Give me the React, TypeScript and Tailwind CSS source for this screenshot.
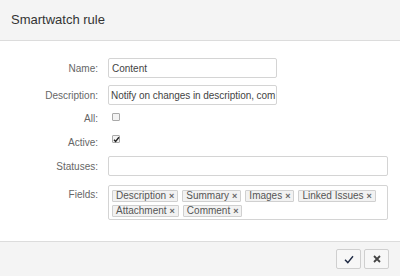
import React from "react";

const font = { fontFamily: '"Liberation Sans", Arial, sans-serif' };

function Label({ children, className = "" }: { children: React.ReactNode; className?: string }) {
  return (
    <div className={"w-[98px] shrink-0 text-right text-[10px] text-[#666] " + className}>{children}</div>
  );
}

function Checkbox({ checked }: { checked?: boolean }) {
  return (
    <span className="relative flex h-[8px] w-[8px] items-center justify-center rounded-[1px] border border-[#a9a9a9] bg-[#f3f3f3]">
      {checked && (
        <svg width="7" height="7" viewBox="0 0 8 8" className="absolute">
          <path d="M1.2 4.2 L3 6.2 L6.8 1.5" fill="none" stroke="#222" strokeWidth="1.6" />
        </svg>
      )}
    </span>
  );
}

function Tag({ children }: { children: React.ReactNode }) {
  return (
    <span className="flex h-[12px] items-center gap-[3px] rounded-[1px] border border-[#d0d0d0] bg-[#f2f2f2] px-[3px] text-[10px] leading-[10px] text-[#555]">
      {children}
      <span className="text-[9px] font-bold text-[#666]">×</span>
    </span>
  );
}

export default function App() {
  return (
    <div className="h-[276px] w-[400px] overflow-hidden bg-white" style={font}>
      <div className="flex h-[41px] items-center border-b border-[#dcdcdc] bg-[#f4f4f4] pl-[11px] text-[13px] text-[#333]">
        Smartwatch rule
      </div>
      <div className="h-[200px] pt-[17px]">
        <div className="flex h-[20px] items-center gap-[10px]">
          <Label>Name:</Label>
          <div className="flex h-[20px] w-[169px] items-center rounded-[2px] border border-[#d4d4d4] px-[3px] text-[10px] text-[#444]">
            Content
          </div>
        </div>
        <div className="mt-[7px] flex h-[20px] items-center gap-[10px]">
          <Label>Description:</Label>
          <div className="flex h-[20px] w-[169px] items-center overflow-hidden whitespace-nowrap rounded-[2px] border border-[#d4d4d4] pl-[2px] text-[10px] tracking-[-0.05px] text-[#444]">
            Notify on changes in description, com
          </div>
        </div>
        <div className="mt-[6px] flex h-[16px] items-start gap-[14px]">
          <Label className="leading-[16px]">All:</Label>
          <div className="mt-[2px]">
            <Checkbox />
          </div>
        </div>
        <div className="mt-[8px] flex h-[16px] items-start gap-[14px]">
          <Label className="leading-[16px]">Active:</Label>
          <div className="mt-[0px]">
            <Checkbox checked />
          </div>
        </div>
        <div className="mt-[5px] flex h-[20px] items-center gap-[10px]">
          <Label>Statuses:</Label>
          <div className="h-[20px] w-[280px] rounded-[2px] border border-[#d4d4d4]" />
        </div>
        <div className="mt-[9px] flex items-start gap-[10px]">
          <Label className="pt-[3px] leading-[14px]">Fields:</Label>
          <div className="flex h-[35px] w-[280px] flex-wrap content-start gap-x-[4px] gap-y-[3px] rounded-[2px] border border-[#d4d4d4] px-[3px] pt-[4px]">
            <Tag>Description</Tag>
            <Tag>Summary</Tag>
            <Tag>Images</Tag>
            <Tag>Linked Issues</Tag>
            <Tag>Attachment</Tag>
            <Tag>Comment</Tag>
          </div>
        </div>
      </div>
      <div className="flex h-[35px] items-start justify-end gap-[3px] border-t border-[#dcdcdc] bg-[#f4f4f4] pr-[11px] pt-[7px]">
        <button className="flex h-[20px] w-[25px] items-center justify-center rounded-[2px] border border-[#cfcfcf] bg-[#f7f7f7]">
          <svg width="10" height="9" viewBox="0 0 10 9">
            <path d="M1 4.8 L3.8 7.6 L9 1.2" fill="none" stroke="#1f2a44" strokeWidth="1.4" />
          </svg>
        </button>
        <button className="flex h-[20px] w-[25px] items-center justify-center rounded-[2px] border border-[#cfcfcf] bg-[#f7f7f7]">
          <svg width="8" height="8" viewBox="0 0 8 8">
            <path d="M1 1 L7 7 M7 1 L1 7" fill="none" stroke="#444" strokeWidth="1.8" />
          </svg>
        </button>
      </div>
    </div>
  );
}
